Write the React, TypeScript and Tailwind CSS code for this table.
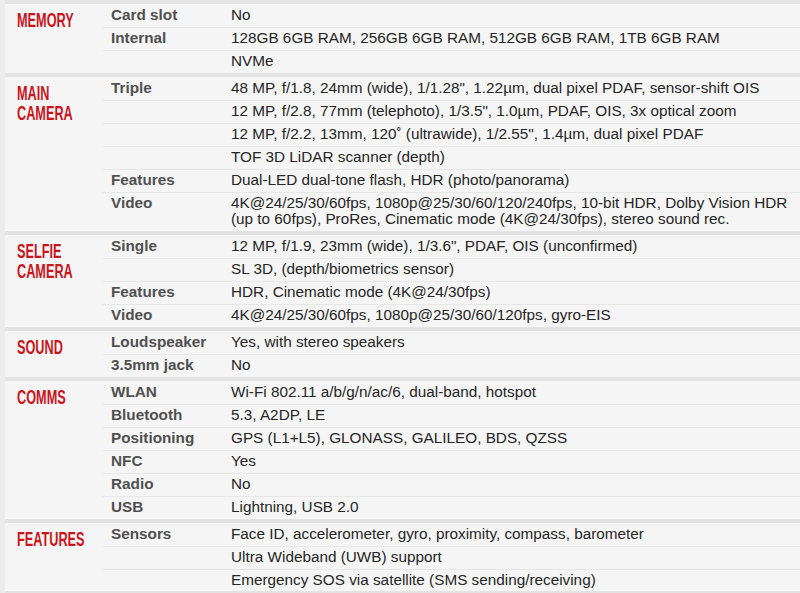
import React from 'react';

interface SpecRow {
  label: string;
  value: React.ReactNode;
}

interface SpecSection {
  title: string[];
  rows: SpecRow[];
}

const sections: SpecSection[] = [
  {
    title: ['MEMORY'],
    rows: [
      { label: 'Card slot', value: 'No' },
      { label: 'Internal', value: '128GB 6GB RAM, 256GB 6GB RAM, 512GB 6GB RAM, 1TB 6GB RAM' },
      { label: '', value: 'NVMe' }
    ]
  },
  {
    title: ['MAIN', 'CAMERA'],
    rows: [
      { label: 'Triple', value: '48 MP, f/1.8, 24mm (wide), 1/1.28", 1.22µm, dual pixel PDAF, sensor-shift OIS' },
      { label: '', value: '12 MP, f/2.8, 77mm (telephoto), 1/3.5", 1.0µm, PDAF, OIS, 3x optical zoom' },
      { label: '', value: '12 MP, f/2.2, 13mm, 120˚ (ultrawide), 1/2.55", 1.4µm, dual pixel PDAF' },
      { label: '', value: 'TOF 3D LiDAR scanner (depth)' },
      { label: 'Features', value: 'Dual-LED dual-tone flash, HDR (photo/panorama)' },
      {
        label: 'Video',
        value: (
          <>
            4K@24/25/30/60fps, 1080p@25/30/60/120/240fps, 10-bit HDR, Dolby Vision HDR
            <br />
            (up to 60fps), ProRes, Cinematic mode (4K@24/30fps), stereo sound rec.
          </>
        )
      }
    ]
  },
  {
    title: ['SELFIE', 'CAMERA'],
    rows: [
      { label: 'Single', value: '12 MP, f/1.9, 23mm (wide), 1/3.6", PDAF, OIS (unconfirmed)' },
      { label: '', value: 'SL 3D, (depth/biometrics sensor)' },
      { label: 'Features', value: 'HDR, Cinematic mode (4K@24/30fps)' },
      { label: 'Video', value: '4K@24/25/30/60fps, 1080p@25/30/60/120fps, gyro-EIS' }
    ]
  },
  {
    title: ['SOUND'],
    rows: [
      { label: 'Loudspeaker', value: 'Yes, with stereo speakers' },
      { label: '3.5mm jack', value: 'No' }
    ]
  },
  {
    title: ['COMMS'],
    rows: [
      { label: 'WLAN', value: 'Wi-Fi 802.11 a/b/g/n/ac/6, dual-band, hotspot' },
      { label: 'Bluetooth', value: '5.3, A2DP, LE' },
      { label: 'Positioning', value: 'GPS (L1+L5), GLONASS, GALILEO, BDS, QZSS' },
      { label: 'NFC', value: 'Yes' },
      { label: 'Radio', value: 'No' },
      { label: 'USB', value: 'Lightning, USB 2.0' }
    ]
  },
  {
    title: ['FEATURES'],
    rows: [
      { label: 'Sensors', value: 'Face ID, accelerometer, gyro, proximity, compass, barometer' },
      { label: '', value: 'Ultra Wideband (UWB) support' },
      { label: '', value: 'Emergency SOS via satellite (SMS sending/receiving)' }
    ]
  }
];

const Section: React.FC<{ section: SpecSection }> = ({ section }) => {
  return (
    <div className="flex border-t-4 border-[#e3e3e3] bg-[#f5f5f5]">
      {/* Category title */}
      <div className="w-[98px] shrink-0 pl-[12px] pt-[6px]">
        <div className="origin-left scale-x-[0.62] whitespace-nowrap text-[20.5px] font-bold leading-[20px] text-[#c8161d]">
          {section.title.map((line, i) => (
            <React.Fragment key={line}>
              {i > 0 && <br />}
              {line}
            </React.Fragment>
          ))}
        </div>
      </div>

      {/* Spec rows */}
      <div className="flex-1">
        {section.rows.map((row, i) => (
          <div
            key={i}
            className={`flex text-[15.3px] leading-[16.93px] ${i === 0 ? 'py-[3px]' : 'border-t border-[#e7e7e7] pt-[2px] pb-[3px]'}`}
          >
            <div className="w-[120px] shrink-0 whitespace-nowrap pl-[8px] font-bold text-[#505050]">
              {row.label}
            </div>
            <div className="flex-1 whitespace-nowrap pl-[8px] text-[#262626]">{row.value}</div>
          </div>
        ))}
      </div>
    </div>
  );
};

export default function App() {
  return (
    <div
      className="h-[593px] w-[800px] overflow-hidden border-l-[5px] border-[#ececec] bg-[#f5f5f5]"
      style={{ fontFamily: '"Liberation Sans", Arial, sans-serif' }}
    >
      {sections.map((s) => (
        <Section key={s.title.join(' ')} section={s} />
      ))}
      <div className="h-[4px] bg-[#e3e3e3]" />
    </div>
  );
}
